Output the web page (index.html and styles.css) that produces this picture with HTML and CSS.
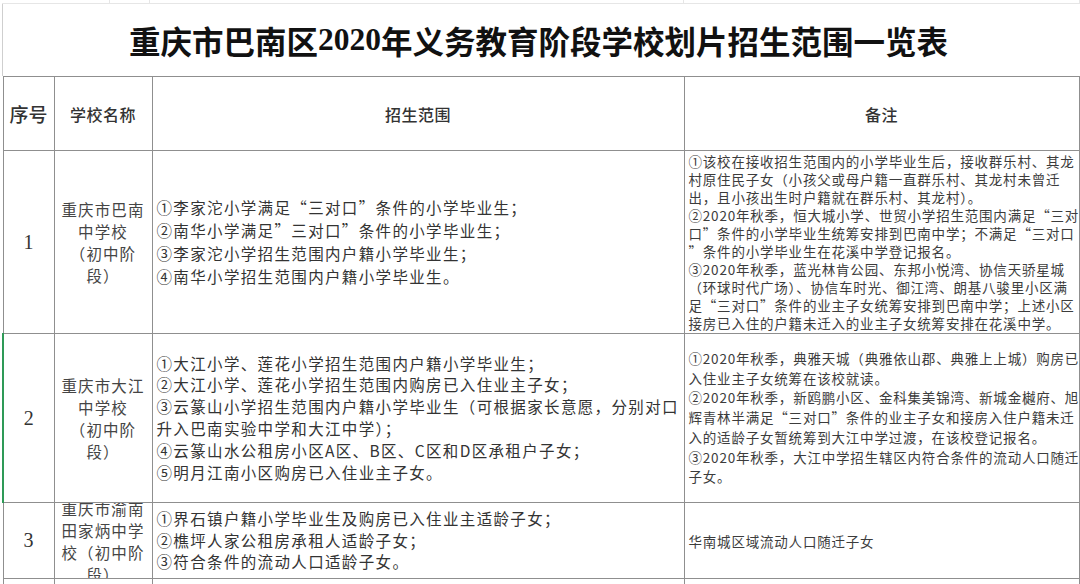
FILE: index.html
```html
<!DOCTYPE html>
<html lang="zh-CN">
<head>
<meta charset="utf-8">
<title>重庆市巴南区2020年义务教育阶段学校划片招生范围一览表</title>
<link rel="stylesheet" href="styles.css">
</head>
<body>
<div class="sheet">
  <div class="topstrip"><span></span><span></span><span></span><span></span></div>
  <h1 class="title">重庆市巴南区<span class="serif">2020</span>年义务教育阶段学校划片招生范围一览表</h1>
  <table class="grid">
    <colgroup>
      <col class="c1"><col class="c2"><col class="c3"><col class="c4">
    </colgroup>
    <tr class="head">
      <th class="h-no">序号</th>
      <th class="h-name">学校名称</th>
      <th class="h-scope">招生范围</th>
      <th class="h-note">备注</th>
    </tr>
    <tr class="r1">
      <td class="no">1</td>
      <td class="name">重庆市巴南<br>中学校<br>（初中阶<br>段）</td>
      <td class="scope">①李家沱小学满足“三对口”条件的小学毕业生；<br>②南华小学满足”三对口”条件的小学毕业生；<br>③李家沱小学招生范围内户籍小学毕业生；<br>④南华小学招生范围内户籍小学毕业生。</td>
      <td class="note">①该校在接收招生范围内的小学毕业生后，接收群乐村、其龙<br>村原住民子女（小孩父或母户籍一直群乐村、其龙村未曾迁<br>出，且小孩出生时户籍就在群乐村、其龙村）。<br>②2020年秋季，恒大城小学、世贸小学招生范围内满足“三对<br>口”条件的小学毕业生统筹安排到巴南中学；不满足“三对口<br>”条件的小学毕业生在花溪中学登记报名。<br>③2020年秋季，蓝光林肯公园、东邦小悦湾、协信天骄星城<br>（环球时代广场）、协信车时光、御江湾、朗基八骏里小区满<br>足“三对口”条件的业主子女统筹安排到巴南中学；上述小区<br>接房已入住的户籍未迁入的业主子女统筹安排在花溪中学。</td>
    </tr>
    <tr class="r2">
      <td class="no selected">2</td>
      <td class="name">重庆市大江<br>中学校<br>（初中阶<br>段）</td>
      <td class="scope">①大江小学、莲花小学招生范围内户籍小学毕业生；<br>②大江小学、莲花小学招生范围内购房已入住业主子女；<br>③云篆山小学招生范围内户籍小学毕业生（可根据家长意愿，分别对口<br>升入巴南实验中学和大江中学）；<br>④云篆山水公租房小区A区、B区、C区和D区承租户子女；<br>⑤明月江南小区购房已入住业主子女。</td>
      <td class="note">①2020年秋季，典雅天城（典雅依山郡、典雅上上城）购房已<br>入住业主子女统筹在该校就读。<br>②2020年秋季，新鸥鹏小区、金科集美锦湾、新城金樾府、旭<br>辉青林半满足“三对口”条件的业主子女和接房入住户籍未迁<br>入的适龄子女暂统筹到大江中学过渡，在该校登记报名。<br>③2020年秋季，大江中学招生辖区内符合条件的流动人口随迁<br>子女。</td>
    </tr>
    <tr class="r3">
      <td class="no">3</td>
      <td class="name"><div class="clip">重庆市渝南<br>田家炳中学<br>校（初中阶<br>段）</div></td>
      <td class="scope">①界石镇户籍小学毕业生及购房已入住业主适龄子女；<br>②樵坪人家公租房承租人适龄子女；<br>③符合条件的流动人口适龄子女。</td>
      <td class="note">华南城区域流动人口随迁子女</td>
    </tr>
    <tr class="r4">
      <td class="no"></td>
      <td class="name"><div class="peek">重庆市南泉</div></td>
      <td class="scope"></td>
      <td class="note"></td>
    </tr>
  </table>
</div>
</body>
</html>
```
FILE: styles.css
```css
html, body {
  margin: 0;
  padding: 0;
  background: #fff;
}

body {
  width: 1080px;
  height: 584px;
  overflow: hidden;
  font-family: "Noto Sans CJK SC", sans-serif;
  color: #333;
}

.sheet {
  padding-left: 2px;
}

.topstrip {
  height: 3px;
  display: grid;
  grid-template-columns: 108px 40px 534px 1fr;
  border-bottom: 1px solid #e6e6e6;
}

.topstrip span {
  border-right: 1px solid #e6e6e6;
}

.title {
  margin: 0;
  height: 72px;
  display: flex;
  align-items: center;
  justify-content: center;
  font-size: 31.5px;
  font-weight: 700;
  color: #111;
  border-left: 1px solid #cfcfcf;
  padding-right: 6px;
}

.serif {
  font-family: "Liberation Serif", serif;
  font-weight: 700;
}

.grid {
  border-collapse: collapse;
  table-layout: fixed;
  width: 1076px;
}

.c1 { width: 51px; }
.c2 { width: 98px; }
.c3 { width: 532px; }
.c4 { width: 395px; }

.grid th,
.grid td {
  border: 1px solid #8f8f8f;
  padding: 0;
  vertical-align: middle;
}

.head th {
  height: 73px;
  font-weight: 500;
  color: #333;
  font-size: 16px;
  letter-spacing: 0.5px;
}

.head .h-no {
  font-size: 19px;
  letter-spacing: 0;
}

.r1 td { height: 182px; }
.r2 td { height: 168px; }
.r3 td { height: 75px; }
.r4 td { height: 20px; vertical-align: top; }

.no {
  text-align: center;
  font-family: "Liberation Serif", serif;
  font-size: 20px;
  color: #333;
}

.selected {
  border-left: 2px solid #2e9a57 !important;
}

.name {
  text-align: center;
  font-size: 15.5px;
  letter-spacing: 1.1px;
  line-height: 22px;
  color: #454545;
  white-space: nowrap;
}

.scope {
  padding-left: 4px !important;
  font-size: 15.5px;
  letter-spacing: 1.35px;
  color: #333;
  white-space: nowrap;
  line-height: 22px;
}

.r1 .scope { line-height: 23px; }
.r2 .scope { line-height: 21.8px; }
.r3 .scope { line-height: 21.5px; }

.note {
  padding-left: 4px !important;
  font-size: 13.5px;
  letter-spacing: 0.8px;
  color: #3c3c3c;
  white-space: nowrap;
  line-height: 18px;
}

.r2 .note { line-height: 19.8px; }

.clip {
  height: 75px;
  overflow: hidden;
  display: flex;
  flex-direction: column;
  justify-content: center;
}

.peek {
  line-height: 22px;
  height: 6px;
  overflow: hidden;
  padding-top: 1px;
}
```
